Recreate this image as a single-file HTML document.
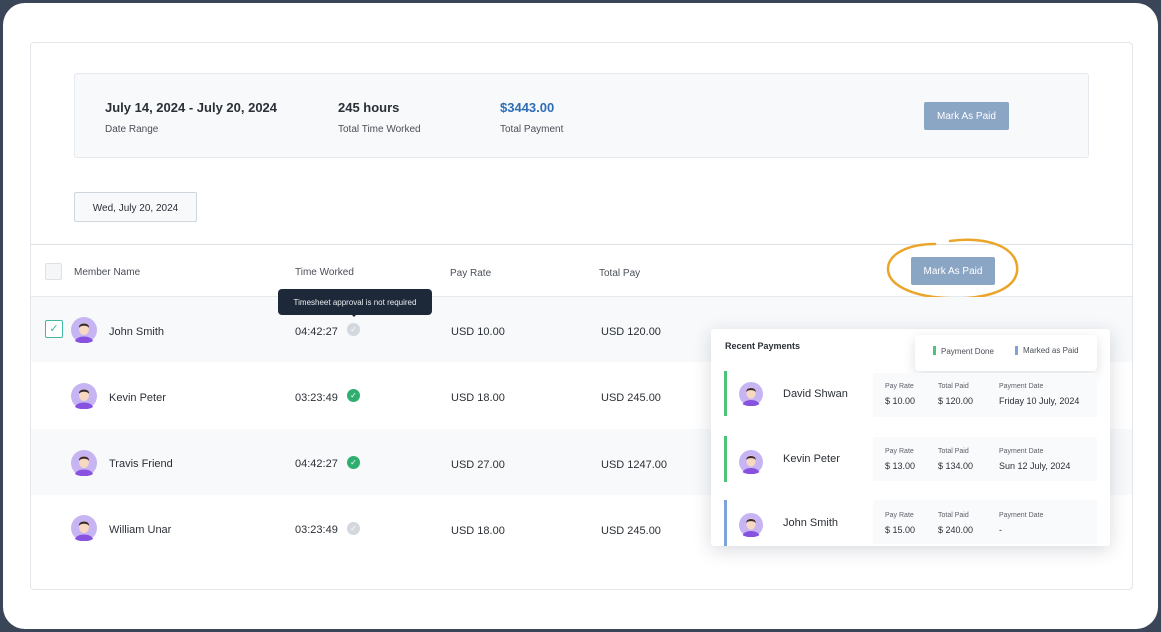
<!DOCTYPE html><html><head><style>
*{box-sizing:border-box;margin:0;padding:0}
body{width:1161px;height:632px;background:#3b4558;font-family:"Liberation Sans",sans-serif;position:relative;overflow:hidden;color:#2b2f36}
.frame{position:absolute;left:3px;top:3px;width:1155px;height:626px;background:#fff;border-radius:22px}
.card{position:absolute;left:30px;top:42px;width:1103px;height:548px;border:1px solid #e3e7eb;border-radius:4px;background:#fff}
.abs{position:absolute}
.sum{left:74px;top:73px;width:1015px;height:85px;background:#f7f9fb;border:1px solid #e6eaee;border-radius:3px}
.big{font-size:13px;font-weight:bold;color:#2b2f36}
.sm{font-size:10px;color:#4a4f57}
.btn{background:#8ba5c4;color:#fff;font-size:10px;text-align:center;border-radius:2px}
.row{position:absolute;left:31px;width:1101px}
.t{font-size:11px;color:#2b2f36;position:absolute;padding-top:2px}
.h{font-size:10px;color:#4a4f57;position:absolute;padding-top:1px}
.chk{width:16px;height:16px;border-radius:12px}
</style></head><body>
<div class="frame"></div>
<div class="card"></div>
<div class="abs sum"></div>
<div class="abs big" style="left:105px;top:100px">July 14, 2024 - July 20, 2024</div>
<div class="abs sm" style="left:105px;top:124px">Date Range</div>
<div class="abs big" style="left:338px;top:100px">245 hours</div>
<div class="abs sm" style="left:338px;top:124px">Total Time Worked</div>
<div class="abs big" style="left:500px;top:100px;color:#2f6db5">$3443.00</div>
<div class="abs sm" style="left:500px;top:124px">Total Payment</div>
<div class="abs btn" style="left:924px;top:102px;width:85px;height:28px;line-height:29px">Mark As Paid</div>
<div class="abs" style="left:74px;top:192px;width:123px;height:30px;border:1px solid #cfd6dd;border-radius:2px;background:#f7f9fb;font-size:10px;text-align:center;line-height:32px">Wed, July 20, 2024</div>
<div class="row" style="top:244px;height:1px;background:#dde2e7"></div>
<div class="row" style="top:296px;height:1px;background:#e6eaee"></div>
<div class="abs" style="left:45px;top:263px;width:17px;height:17px;border:1px solid #dde2e7;border-radius:2px;background:#f4f6f8"></div>
<div class="h" style="left:74px;top:266px">Member Name</div>
<div class="h" style="left:295px;top:266px">Time Worked</div>
<div class="h" style="left:450px;top:267px">Pay Rate</div>
<div class="h" style="left:599px;top:267px">Total Pay</div>
<div class="abs btn" style="left:911px;top:257px;width:84px;height:28px;line-height:30px">Mark As Paid</div>
<svg class="abs" style="left:880px;top:232px" width="145" height="75"><path d="M70 9 C105 4 140 14 137 40 C133 62 95 68 65 66 C30 64 8 52 8 37 C8 22 28 12 55 12" fill="none" stroke="#eaa52a" stroke-width="2.5" stroke-linecap="round"/></svg>
<div class="row" style="top:297px;height:65px;background:#f7f9fb"></div>
<div class="row" style="top:429px;height:66px;background:#f7f9fb"></div>
<div class="abs" style="left:45px;top:320px;width:18px;height:18px;border:1px solid #3fb9a0;border-radius:2px;background:#fff;color:#3fb9a0;font-size:11px;text-align:center;line-height:16px">✓</div>
<svg width="0" height="0" style="position:absolute"><defs><g id="av"><circle cx="13" cy="13" r="13" fill="#c7b4f3"/><path d="M4 24 C6 18 20 18 22 24 C18 27 8 27 4 24Z" fill="#8752e0"/><ellipse cx="13" cy="12" rx="5" ry="6" fill="#f7d8c2"/><path d="M8 11 C7 5 19 5 18 11 C17 8 9 8 8 11Z" fill="#3a2a2a"/></g></defs></svg>
<svg class="abs" style="left:71px;top:317px" width="26" height="26"><use href="#av"/></svg>
<svg class="abs" style="left:71px;top:383px" width="26" height="26"><use href="#av"/></svg>
<svg class="abs" style="left:71px;top:450px" width="26" height="26"><use href="#av"/></svg>
<svg class="abs" style="left:71px;top:515px" width="26" height="26"><use href="#av"/></svg>
<div class="t" style="left:109px;top:324px">John Smith</div>
<div class="t" style="left:109px;top:390px">Kevin Peter</div>
<div class="t" style="left:109px;top:456px">Travis Friend</div>
<div class="t" style="left:109px;top:522px">William Unar</div>
<div class="t" style="left:295px;top:324px">04:42:27</div>
<div class="t" style="left:295px;top:390px">03:23:49</div>
<div class="t" style="left:295px;top:456px">04:42:27</div>
<div class="t" style="left:295px;top:522px">03:23:49</div>
<div class="abs chk" style="left:347px;top:323px;width:13px;height:13px;background:#d3d8de;color:#fff;font-size:8px;text-align:center;line-height:13px">✓</div>
<div class="abs chk" style="left:347px;top:389px;width:13px;height:13px;background:#2fae6f;color:#fff;font-size:8px;text-align:center;line-height:13px">✓</div>
<div class="abs chk" style="left:347px;top:456px;width:13px;height:13px;background:#2fae6f;color:#fff;font-size:8px;text-align:center;line-height:13px">✓</div>
<div class="abs chk" style="left:347px;top:522px;width:13px;height:13px;background:#d3d8de;color:#fff;font-size:8px;text-align:center;line-height:13px">✓</div>
<div class="abs" style="left:278px;top:289px;width:154px;height:26px;background:#1d2838;border-radius:4px;color:#e8ecf0;font-size:8px;text-align:center;line-height:27px">Timesheet approval is not required</div>
<div class="abs" style="left:349px;top:312px;width:0;height:0;border-left:5px solid transparent;border-right:5px solid transparent;border-top:5px solid #1d2838"></div>
<div class="t" style="left:451px;top:324px">USD 10.00</div>
<div class="t" style="left:451px;top:390px">USD 18.00</div>
<div class="t" style="left:451px;top:457px">USD 27.00</div>
<div class="t" style="left:451px;top:523px">USD 18.00</div>
<div class="t" style="left:601px;top:324px">USD 120.00</div>
<div class="t" style="left:601px;top:390px">USD 245.00</div>
<div class="t" style="left:601px;top:457px">USD 1247.00</div>
<div class="t" style="left:601px;top:523px">USD 245.00</div>
<div class="abs" style="left:711px;top:329px;width:399px;height:217px;background:#fff;border-radius:3px;box-shadow:0 4px 18px rgba(40,50,70,.18)"></div>
<div class="abs" style="left:725px;top:341px;font-size:9px;font-weight:bold;color:#2b2f36">Recent Payments</div>
<div class="abs" style="left:915px;top:335px;width:182px;height:36px;background:#fff;border-radius:4px;box-shadow:0 4px 12px rgba(40,50,70,.15)"></div>
<div class="abs" style="left:933px;top:346px;width:3px;height:9px;background:#4cc27a"></div>
<div class="abs" style="left:941px;top:347px;font-size:8px;color:#4a4f57">Payment Done</div>
<div class="abs" style="left:1015px;top:346px;width:3px;height:9px;background:#7fa3d8"></div>
<div class="abs" style="left:1023px;top:346px;font-size:8px;color:#4a4f57">Marked as Paid</div>
<div class="abs" style="left:873px;top:373px;width:224px;height:44px;background:#f9fafc"></div>
<div class="abs" style="left:873px;top:437px;width:224px;height:44px;background:#f9fafc"></div>
<div class="abs" style="left:873px;top:500px;width:224px;height:44px;background:#f9fafc"></div>
<div class="abs" style="left:724px;top:371px;width:3px;height:45px;background:#4cc27a"></div>
<div class="abs" style="left:724px;top:436px;width:3px;height:46px;background:#4cc27a"></div>
<div class="abs" style="left:724px;top:500px;width:3px;height:46px;background:#7fa3d8"></div>
<svg class="abs" style="left:739px;top:382px" width="24" height="24" viewBox="0 0 26 26"><use href="#av"/></svg>
<svg class="abs" style="left:739px;top:450px" width="24" height="24" viewBox="0 0 26 26"><use href="#av"/></svg>
<svg class="abs" style="left:739px;top:513px" width="24" height="24" viewBox="0 0 26 26"><use href="#av"/></svg>
<div class="t" style="left:783px;top:386px">David Shwan</div>
<div class="t" style="left:783px;top:451px">Kevin Peter</div>
<div class="t" style="left:783px;top:515px">John Smith</div>
<div class="abs" style="left:885px;top:383px;font-size:7px;color:#5a5f67">Pay Rate</div>
<div class="abs" style="left:938px;top:383px;font-size:7px;color:#5a5f67">Total Paid</div>
<div class="abs" style="left:999px;top:383px;font-size:7px;color:#5a5f67">Payment Date</div>
<div class="abs" style="left:885px;top:396px;font-size:9px">$ 10.00</div>
<div class="abs" style="left:938px;top:396px;font-size:9px">$ 120.00</div>
<div class="abs" style="left:999px;top:396px;font-size:9px">Friday 10 July, 2024</div>
<div class="abs" style="left:885px;top:448px;font-size:7px;color:#5a5f67">Pay Rate</div>
<div class="abs" style="left:938px;top:448px;font-size:7px;color:#5a5f67">Total Paid</div>
<div class="abs" style="left:999px;top:448px;font-size:7px;color:#5a5f67">Payment Date</div>
<div class="abs" style="left:885px;top:461px;font-size:9px">$ 13.00</div>
<div class="abs" style="left:938px;top:461px;font-size:9px">$ 134.00</div>
<div class="abs" style="left:999px;top:461px;font-size:9px">Sun 12 July, 2024</div>
<div class="abs" style="left:885px;top:512px;font-size:7px;color:#5a5f67">Pay Rate</div>
<div class="abs" style="left:938px;top:512px;font-size:7px;color:#5a5f67">Total Paid</div>
<div class="abs" style="left:999px;top:512px;font-size:7px;color:#5a5f67">Payment Date</div>
<div class="abs" style="left:885px;top:525px;font-size:9px">$ 15.00</div>
<div class="abs" style="left:938px;top:525px;font-size:9px">$ 240.00</div>
<div class="abs" style="left:999px;top:525px;font-size:9px">-</div>
</body></html>
